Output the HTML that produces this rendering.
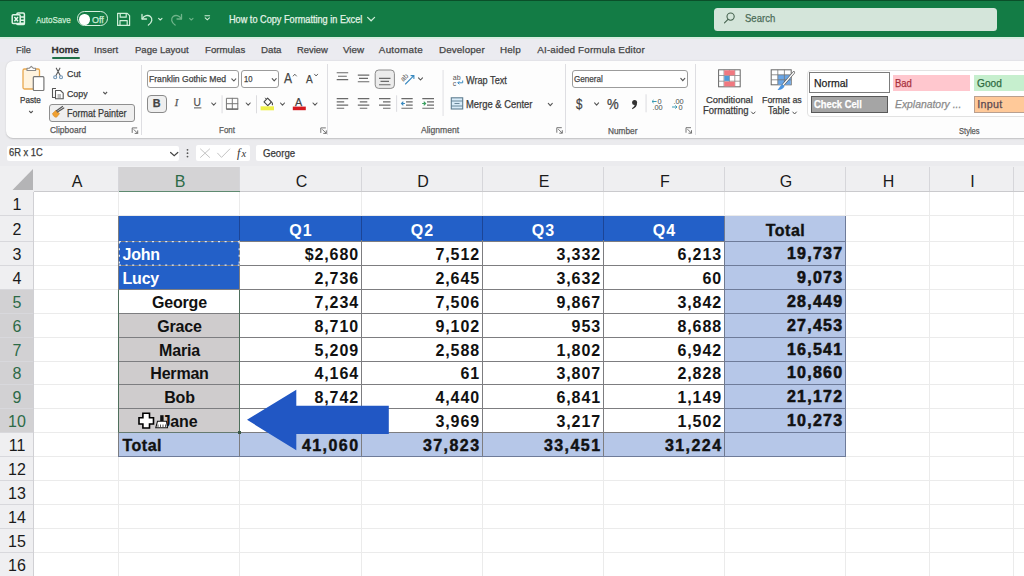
<!DOCTYPE html><html><head><meta charset="utf-8"><style>*{margin:0;padding:0;box-sizing:border-box}
html,body{width:1024px;height:576px;overflow:hidden;background:#ebebee;font-family:"Liberation Sans",sans-serif;position:relative}
.a{position:absolute}
.t{position:absolute;white-space:pre;line-height:1;-webkit-text-stroke:0.25px currentColor}
.ch{top:167px;height:25px;font-size:16px;text-align:center;line-height:29px;padding-left:2px;border-right:1px solid #d6d6da}
.rh{left:0;width:34px;font-size:16px;text-align:center;border-bottom:1px solid #d8d8dc}
.c{position:absolute;font-size:16px;font-weight:bold;color:#111;white-space:nowrap;overflow:hidden}
svg{position:absolute;overflow:visible}
</style></head><body>
<div class="a" style="left:0;top:0;width:1024px;height:37px;background:#137c45"></div>
<div class="a" style="left:0;top:0;width:1024px;height:1px;background:#0a4f29"></div>
<svg style="left:0;top:0" width="40" height="37"><g fill="none" stroke="#dff4e6" stroke-width="1.5">
<rect x="16.8" y="13" width="7.6" height="11.6" rx="1.2"/>
<path d="M19.5 16.9H24.3M19.5 20.2H24.3M19.5 23.3H24.3"/>
</g><rect x="12.2" y="14.8" width="8" height="8.6" rx="1" fill="#137c45" stroke="#dff4e6" stroke-width="1.5"/>
<path d="M14.4 17L18 21.2M18 17L14.4 21.2" stroke="#e8f8ee" stroke-width="1.5" fill="none"/></svg>
<div class="t" style="left:36.42px;top:14.76px;font-size:9.74px;letter-spacing:0.000px;color:#cfeed8;font-weight:normal;font-style:normal;font-family:'Liberation Sans';transform:scaleX(0.8219);transform-origin:0 0;">AutoSave</div>
<div class="a" style="left:77px;top:11.2px;width:30.5px;height:15.2px;border:1.7px solid #d8f0df;border-radius:8px"></div>
<div class="a" style="left:79.2px;top:14.2px;width:10.4px;height:10.4px;background:#ffffff;border-radius:5.2px"></div>
<div class="t" style="left:91.62px;top:14.76px;font-size:9.74px;letter-spacing:0.000px;color:#cfeed8;font-weight:normal;font-style:normal;font-family:'Liberation Sans';transform:scaleX(0.9210);transform-origin:0 0;">Off</div>
<svg style="left:0;top:0" width="400" height="37"><g fill="none" stroke="#cfeed8" stroke-width="1.2" stroke-linejoin="round">
<path d="M117.6 13.3H127.2L129.6 15.7V25.4H117.6Z"/>
<path d="M120.2 13.3V17.2H126.2V13.3"/>
<path d="M120 25.4V20.6H127.2V25.4"/>
</g>
<g fill="none" stroke="#cfeed8" stroke-width="1.3" stroke-linecap="round" stroke-linejoin="round">
<path d="M142 14.5V19H146.5"/>
<path d="M142.3 18.7C144 15.5 148 14.6 150.4 16.6C152.8 18.8 152.3 22.2 148.4 25"/>
<path d="M158.6 18.3L160.3 20L162 18.3" stroke-width="1.1"/>
</g>
<g fill="none" stroke="#6fb48a" stroke-width="1.3" stroke-linecap="round" stroke-linejoin="round">
<path d="M181.5 14.5V19H177"/>
<path d="M181.2 18.7C179.5 15.5 175.5 14.6 173.1 16.6C170.7 18.8 171.2 22.2 175.1 25"/>
<path d="M189.6 18.3L191.3 20L193 18.3" stroke-width="1.1"/>
</g>
<g fill="none" stroke="#cfeed8" stroke-width="1.1" stroke-linecap="round">
<path d="M205 15.8H209.6"/><path d="M205.2 17.8L207.3 19.8L209.4 17.8"/>
</g>
<path d="M367.6 17.4L371.1 20.8L374.6 17.4" fill="none" stroke="#cfeed8" stroke-width="1.2" stroke-linecap="round"/>
</svg>
<div class="t" style="left:229.39px;top:14.85px;font-size:10.1px;letter-spacing:0.000px;color:#e4f4e8;font-weight:normal;font-style:normal;font-family:'Liberation Sans';transform:scaleX(0.9069);transform-origin:0 0;">How to Copy Formatting in Excel</div>
<div class="a" style="left:714px;top:7.5px;width:283px;height:23.5px;background:#d4e5da;border-radius:3.5px"></div>
<svg style="left:0;top:0" width="1024" height="37"><g fill="none" stroke="#46634f" stroke-width="1.1" stroke-linecap="round">
<circle cx="730.6" cy="16.6" r="3.6"/><path d="M728 19.4L724.5 22.8"/></g></svg>
<div class="t" style="left:744.62px;top:13.10px;font-size:11.34px;letter-spacing:-0.000px;color:#4b6b57;font-weight:normal;font-style:normal;font-family:'Liberation Sans';transform:scaleX(0.8411);transform-origin:0 0;">Search</div>
<div class="a" style="left:0;top:37px;width:1024px;height:25px;background:#ebebf0"></div>
<div class="a" style="left:0;top:37px;width:1024px;height:1.5px;background:#d8eee0"></div>
<div class="t" style="left:16.21px;top:45.44px;font-size:9.88px;letter-spacing:0.000px;color:#454545;font-weight:normal;font-style:normal;font-family:'Liberation Sans';transform:scaleX(0.9358);transform-origin:0 0;">File</div>
<div class="t" style="left:94.01px;top:45.44px;font-size:9.88px;letter-spacing:0.000px;color:#454545;font-weight:normal;font-style:normal;font-family:'Liberation Sans';transform:scaleX(0.9796);transform-origin:0 0;">Insert</div>
<div class="t" style="left:135.01px;top:45.44px;font-size:9.88px;letter-spacing:0.000px;color:#454545;font-weight:normal;font-style:normal;font-family:'Liberation Sans';transform:scaleX(0.9663);transform-origin:0 0;">Page Layout</div>
<div class="t" style="left:204.61px;top:45.44px;font-size:9.88px;letter-spacing:0.000px;color:#454545;font-weight:normal;font-style:normal;font-family:'Liberation Sans';transform:scaleX(0.9768);transform-origin:0 0;">Formulas</div>
<div class="t" style="left:260.51px;top:45.44px;font-size:9.88px;letter-spacing:0.000px;color:#454545;font-weight:normal;font-style:normal;font-family:'Liberation Sans';transform:scaleX(0.9828);transform-origin:0 0;">Data</div>
<div class="t" style="left:296.51px;top:45.44px;font-size:9.88px;letter-spacing:0.000px;color:#454545;font-weight:normal;font-style:normal;font-family:'Liberation Sans';transform:scaleX(0.9540);transform-origin:0 0;">Review</div>
<div class="t" style="left:342.61px;top:45.44px;font-size:9.88px;letter-spacing:0.000px;color:#454545;font-weight:normal;font-style:normal;font-family:'Liberation Sans';transform:scaleX(0.9937);transform-origin:0 0;">View</div>
<div class="t" style="left:378.81px;top:45.44px;font-size:9.88px;letter-spacing:0.246px;color:#454545;font-weight:normal;font-style:normal;font-family:'Liberation Sans';">Automate</div>
<div class="t" style="left:438.91px;top:45.44px;font-size:9.88px;letter-spacing:0.098px;color:#454545;font-weight:normal;font-style:normal;font-family:'Liberation Sans';">Developer</div>
<div class="t" style="left:499.91px;top:45.44px;font-size:9.88px;letter-spacing:0.146px;color:#454545;font-weight:normal;font-style:normal;font-family:'Liberation Sans';">Help</div>
<div class="t" style="left:537.31px;top:45.44px;font-size:9.88px;letter-spacing:0.142px;color:#454545;font-weight:normal;font-style:normal;font-family:'Liberation Sans';">AI-aided Formula Editor</div>
<div class="t" style="left:51.61px;top:45.44px;font-size:9.88px;letter-spacing:0.285px;color:#333;font-weight:normal;font-style:normal;font-family:'Liberation Sans';-webkit-text-stroke:0.6px #333;">Home</div>
<div class="a" style="left:52px;top:57px;width:28px;height:2px;background:#1f6f47;border-radius:1px"></div>
<div class="a" style="left:0;top:62px;width:1024px;height:104px;background:#ebebee"></div>
<div class="a" style="left:6px;top:60.8px;width:1030px;height:77.2px;background:#fdfdfd;border-radius:7px;box-shadow:0 0.5px 1.5px rgba(0,0,0,0.18)"></div>
<div class="t" style="left:49.97px;top:126.19px;font-size:8.87px;letter-spacing:0.000px;color:#5a5a5a;font-weight:normal;font-style:normal;font-family:'Liberation Sans';transform:scaleX(0.9546);transform-origin:0 0;">Clipboard</div>
<div class="t" style="left:219.34px;top:126.13px;font-size:9.3px;letter-spacing:0.000px;color:#5a5a5a;font-weight:normal;font-style:normal;font-family:'Liberation Sans';transform:scaleX(0.8598);transform-origin:0 0;">Font</div>
<div class="t" style="left:420.95px;top:126.45px;font-size:9.16px;letter-spacing:0.000px;color:#5a5a5a;font-weight:normal;font-style:normal;font-family:'Liberation Sans';transform:scaleX(0.9357);transform-origin:0 0;">Alignment</div>
<div class="t" style="left:608.29px;top:126.76px;font-size:8.43px;letter-spacing:0.000px;color:#5a5a5a;font-weight:normal;font-style:normal;font-family:'Liberation Sans';transform:scaleX(0.9844);transform-origin:0 0;">Number</div>
<div class="t" style="left:958.98px;top:126.52px;font-size:8.72px;letter-spacing:0.000px;color:#5a5a5a;font-weight:normal;font-style:normal;font-family:'Liberation Sans';transform:scaleX(0.8674);transform-origin:0 0;">Styles</div>
<div class="a" style="left:141px;top:65px;width:1px;height:70px;background:#dedee2"></div>
<div class="a" style="left:327px;top:64px;width:1px;height:71px;background:#dedee2"></div>
<div class="a" style="left:565px;top:64px;width:1px;height:69px;background:#dedee2"></div>
<div class="a" style="left:694.5px;top:64px;width:1px;height:71px;background:#dedee2"></div>
<div class="t" style="left:20.25px;top:95.95px;font-size:9.16px;letter-spacing:0.000px;color:#3a3a3a;font-weight:normal;font-style:normal;font-family:'Liberation Sans';transform:scaleX(0.8923);transform-origin:0 0;">Paste</div>
<div class="t" style="left:66.61px;top:69.04px;font-size:9.88px;letter-spacing:0.000px;color:#3a3a3a;font-weight:normal;font-style:normal;font-family:'Liberation Sans';transform:scaleX(0.8976);transform-origin:0 0;">Cut</div>
<div class="t" style="left:66.62px;top:88.96px;font-size:9.74px;letter-spacing:0.000px;color:#3a3a3a;font-weight:normal;font-style:normal;font-family:'Liberation Sans';transform:scaleX(0.9061);transform-origin:0 0;">Copy</div>
<div class="a" style="left:49px;top:103.5px;width:85.6px;height:18px;border:1px solid #8f8f8f;border-radius:3px;background:#efefef"></div>
<div class="t" style="left:67.00px;top:108.61px;font-size:10.03px;letter-spacing:0.000px;color:#3a3a3a;font-weight:normal;font-style:normal;font-family:'Liberation Sans';transform:scaleX(0.8966);transform-origin:0 0;">Format Painter</div>
<svg style="left:0;top:0" width="1024" height="140">
<rect x="23" y="69" width="16.5" height="20" rx="1.5" fill="#fff3de" stroke="#e9a84e" stroke-width="1.3"/>
<path d="M27 70.5V68.2H29.4L31.3 66.3L33.2 68.2H35.6V70.5Z" fill="#fff" stroke="#8a8a8a" stroke-width="1.1" stroke-linejoin="round"/>
<rect x="33.3" y="76.7" width="10.6" height="13.8" rx="1" fill="#fff" stroke="#777" stroke-width="1.2"/>
<path d="M29.2 111L31 112.8L32.8 111" fill="none" stroke="#555" stroke-width="1.1"/>
<g fill="none" stroke-width="1.2" stroke-linecap="round">
<path d="M56.3 68.2L60.2 75.6M59.9 68.2L56 75.6" stroke="#5a5a5a" stroke-width="1.1"/>
<circle cx="55.2" cy="77.3" r="1.5" stroke="#7195b5" stroke-width="1.1"/><circle cx="61" cy="77.3" r="1.5" stroke="#7195b5" stroke-width="1.1"/></g>
<g fill="none" stroke="#555" stroke-width="1.1" stroke-linejoin="round">
<path d="M56 88.5H52.5V97.5H55"/>
<path d="M55.5 90.5H60.5L63.2 93.2V98.8H55.5Z" fill="#fff"/>
<path d="M57.5 95H61M57.5 97H61" stroke-width="0.8"/></g>
<path d="M103.3 92L105.2 93.9L107.1 92" fill="none" stroke="#555" stroke-width="1.1"/>
<path d="M52.5 113.5L56 110.2L59.5 113.7L56.5 117.2C55 117.5 53.2 116.3 52.5 113.5Z" fill="#f0a030" stroke="#d58a20" stroke-width="0.6"/>
<path d="M56.5 110.8L62.5 106.5M57.5 112L63.8 108" stroke="#555" stroke-width="1.2" fill="none" stroke-linecap="round"/>
<g fill="none" stroke="#666" stroke-width="0.9"><path d="M132.2 132.9V127.9H137.2M133.7 129.4L137.7 133.4M137.7 130.4V133.4H134.7" /><path d="M320.8 132.9V127.9H325.8M322.3 129.4L326.3 133.4M326.3 130.4V133.4H323.3" /><path d="M556.8 132.7V127.7H561.8M558.3 129.2L562.3 133.2M562.3 130.2V133.2H559.3" /><path d="M686.0 132.7V127.7H691.0M687.5 129.2L691.5 133.2M691.5 130.2V133.2H688.5" /></g>
</svg>
<div class="a" style="left:147.3px;top:70px;width:91.5px;height:18px;border:1px solid #9c9c9c;border-radius:3px;background:#fff"></div>
<div class="t" style="left:149.38px;top:75.42px;font-size:8.72px;letter-spacing:0.000px;color:#444;font-weight:normal;font-style:normal;font-family:'Liberation Sans';transform:scaleX(0.9870);transform-origin:0 0;">Franklin Gothic Med</div>
<div class="a" style="left:241.3px;top:70.3px;width:38px;height:17.3px;border:1px solid #9c9c9c;border-radius:3px;background:#fff"></div>
<div class="t" style="left:243.68px;top:75.42px;font-size:8.72px;letter-spacing:0.000px;color:#444;font-weight:normal;font-style:normal;font-family:'Liberation Sans';transform:scaleX(0.8760);transform-origin:0 0;">10</div>
<div class="a" style="left:147.3px;top:94.8px;width:19.3px;height:18.3px;border:1px solid #8a8a8a;border-radius:4px;background:#efefef"></div>
<div class="t" style="left:152.65px;top:97.86px;font-size:10.8px;letter-spacing:0.000px;color:#444;font-weight:bold;font-style:normal;font-family:'Liberation Sans';">B</div>
<div class="t" style="left:174.87px;top:98.11px;font-size:10.5px;letter-spacing:0.000px;color:#555;font-weight:normal;font-style:italic;font-family:'Liberation Serif';">I</div>
<div class="t" style="left:193.59px;top:98.07px;font-size:10.2px;letter-spacing:0.000px;color:#555;font-weight:normal;font-style:normal;font-family:'Liberation Sans';">U</div>
<div class="t" style="left:283.93px;top:70.90px;font-size:14.53px;letter-spacing:0.000px;color:#444;font-weight:normal;font-style:normal;font-family:'Liberation Sans';transform:scaleX(0.8258);transform-origin:0 0;">A</div>
<div class="t" style="left:306.20px;top:73.36px;font-size:11.63px;letter-spacing:0.000px;color:#444;font-weight:normal;font-style:normal;font-family:'Liberation Sans';transform:scaleX(0.8628);transform-origin:0 0;">A</div>
<div class="t" style="left:295.34px;top:96.65px;font-size:11.05px;letter-spacing:0.000px;color:#444;font-weight:normal;font-style:normal;font-family:'Liberation Sans';transform:scaleX(0.9763);transform-origin:0 0;">A</div>
<svg style="left:0;top:0" width="1024" height="140"><g fill="none" stroke="#555" stroke-width="1.1" stroke-linecap="round" stroke-linejoin="round">
<path d="M231.8 78.8L233.8 81.0L235.8 78.8"/>
<path d="M272.2 78.6L274.2 80.8L276.2 78.6"/>
<path d="M211.7 103L213.7 105.2L215.7 103"/>
<path d="M246.2 103L248.2 105.2L250.2 103"/>
<path d="M280.5 103L282.5 105.2L284.5 103"/>
<path d="M313 103L315.0 105.2L317 103"/>
<path d="M594.6 102.9L596.6 105.10000000000001L598.6 102.9"/>
<path d="M680.8 78.4L682.8 80.60000000000001L684.8 78.4"/>
<path d="M418.5 77.8L420.5 80.0L422.5 77.8"/>
<path d="M548.3 103.4L550.3 105.60000000000001L552.3 103.4"/>
<path d="M293.2 76L294.8 74.2L296.4 76M314.5 74.2L316.1 76L317.7 74.2" stroke-width="0.9"/>
<path d="M194.4 107.9H201" stroke-width="1"/>
<rect x="226.8" y="98.3" width="11" height="10.8" stroke="#777" stroke-width="1"/><path d="M232.3 98.3V109.1M226.8 103.7H237.8" stroke="#777" stroke-width="1"/>
<path d="M226.8 109.1H237.8" stroke="#666" stroke-width="1.3"/>
</g><g fill="#d8d8dc"><rect x="221.6" y="95.3" width="0.9" height="18"/><rect x="256" y="95.3" width="0.9" height="18"/><rect x="396.2" y="95.3" width="0.9" height="16.5"/><rect x="645.6" y="94.3" width="0.9" height="18"/></g>
<path d="M264 101.8L267.6 98.2L271.4 102L267.8 105.6Z" fill="none" stroke="#444" stroke-width="1.1" stroke-linejoin="round"/><path d="M266.2 99L265.2 97.8" stroke="#444" stroke-width="1"/><path d="M271.6 102.2C272.6 103.2 272.8 104.3 272 105" stroke="#444" stroke-width="1.1" fill="none"/>
<rect x="260.6" y="106.3" width="13.4" height="4" fill="#eef04a"/>
<rect x="292.8" y="106.6" width="13" height="3.6" fill="#d71920"/>
</svg>
<svg style="left:0;top:0" width="1024" height="140"><rect x="442.6" y="70" width="0.9" height="46" fill="#dcdce0"/><g stroke="#6a6a6a" stroke-width="1.1" fill="none">
<path d="M336.7 72.8H348.2M338 76.3H346.8M336.7 79.6H348.2"/>
<path d="M357.8 75.1H369.3M359 78.4H368M357.8 81.7H369.3"/>
</g><rect x="375.2" y="70" width="19.2" height="18.4" rx="3.5" fill="#ececec" stroke="#8a8a8a" stroke-width="1"/>
<g stroke="#6a6a6a" stroke-width="1.1" fill="none"><path d="M379 78.4H390.5M380.5 81.4H389M379 84.8H390.5"/>
<path d="M336.7 98.6H348.2M336.7 101.9H344.2M336.7 105.1H348.2M336.7 108.3H344.2"/>
<path d="M357.8 98.6H369.3M359.8 101.9H367.3M357.8 105.1H369.3M359.8 108.3H367.3"/>
<path d="M379 98.6H390.5M383 101.9H390.5M379 105.1H390.5M383 108.3H390.5"/>
<path d="M401.4 98.6H412.7M406 101.9H412.7M406 105.1H412.7M401.4 108.3H412.7"/>
<path d="M422.3 98.6H434M427 101.9H434M427 105.1H434M422.3 108.3H434"/>
</g><g stroke-width="1.1" fill="none" stroke-linecap="round">
<path d="M404.5 103.5H401.5M403 102L401.5 103.5L403 105" stroke="#3a8ac0"/>
<path d="M422.6 103.5H425.6M424.1 102L425.6 103.5L424.1 105" stroke="#3aa060"/>
</g><text transform="translate(403.2 82) rotate(-45)" font-family="Liberation Sans" font-size="7.2" fill="#555">ab</text><g stroke-width="1.1" fill="none" stroke-linecap="round"><path d="M405.5 84L413.6 75.9M411 75.6H413.9V78.5" stroke="#3a8ac0"/>
</g>
<text x="452.8" y="79.6" font-family="Liberation Sans" font-size="7" fill="#555">ab</text><text x="452.8" y="85.6" font-family="Liberation Sans" font-size="7" fill="#555">c</text>
<path d="M462.7 80.5V82.8H457.8M459.3 81.3L457.8 82.8L459.3 84.3" fill="none" stroke="#3a8ac0" stroke-width="1"/>
<rect x="451.3" y="97.8" width="11.4" height="11.2" fill="#d8ebf8" stroke="#5e7d90" stroke-width="1.1"/><path d="M451.3 101H462.7M451.3 106H462.7M454.5 103.5H459.5" stroke="#5e7d90" stroke-width="0.9"/>
</svg>
<div class="t" style="left:466.15px;top:74.69px;font-size:10.76px;letter-spacing:0.000px;color:#3a3a3a;font-weight:normal;font-style:normal;font-family:'Liberation Sans';transform:scaleX(0.8521);transform-origin:0 0;">Wrap Text</div>
<div class="t" style="left:466.20px;top:99.91px;font-size:10.03px;letter-spacing:0.000px;color:#3a3a3a;font-weight:normal;font-style:normal;font-family:'Liberation Sans';transform:scaleX(0.9391);transform-origin:0 0;">Merge &amp; Center</div>
<div class="a" style="left:572.3px;top:70.2px;width:115.5px;height:18px;border:1px solid #9c9c9c;border-radius:3px;background:#fff"></div>
<div class="t" style="left:573.95px;top:75.15px;font-size:9.16px;letter-spacing:0.000px;color:#444;font-weight:normal;font-style:normal;font-family:'Liberation Sans';transform:scaleX(0.8871);transform-origin:0 0;">General</div>
<div class="t" style="left:576.44px;top:96.72px;font-size:14.39px;letter-spacing:-0.100px;color:#444;font-weight:normal;font-style:normal;font-family:'Liberation Sans';transform:scaleX(0.8000);transform-origin:0 0;">$</div>
<div class="t" style="left:606.85px;top:97.16px;font-size:14.1px;letter-spacing:0.000px;color:#444;font-weight:normal;font-style:normal;font-family:'Liberation Sans';transform:scaleX(0.9325);transform-origin:0 0;">%</div>
<svg style="left:0;top:0" width="1024" height="140">
<circle cx="634.6" cy="102.6" r="2.5" fill="#333"/><path d="M636.9 103C637.2 105.8 635.5 108 632.4 109.2L632 108.2C633.8 107.2 634.6 106 634.8 104.6Z" fill="#333"/>
<text x="657.6" y="104.2" font-family="Liberation Sans" font-size="7.4" fill="#4a4a4a">0</text><text x="652.4" y="110" font-family="Liberation Sans" font-size="7.4" fill="#4a4a4a">.00</text>
<path d="M656.6 101.5H652M653.6 100L652 101.5L653.6 103" stroke="#3a9ab0" stroke-width="1" fill="none"/>
<text x="673.4" y="104.2" font-family="Liberation Sans" font-size="7.4" fill="#4a4a4a">.00</text><text x="678.6" y="110" font-family="Liberation Sans" font-size="7.4" fill="#4a4a4a">0</text>
<path d="M672 107H677M675.4 105.4L677 107L675.4 108.6" stroke="#3a9ab0" stroke-width="1" fill="none"/>
<rect x="718.6" y="69.8" width="21.6" height="17" fill="#fff" stroke="#666" stroke-width="1"/>
<path d="M724 69.8V86.8M729.4 69.8V86.8M734.8 69.8V86.8M718.6 75.5H740.2M718.6 81.2H740.2" stroke="#888" stroke-width="0.8"/>
<rect x="724.2" y="70.3" width="10.6" height="5" fill="#f07880"/><rect x="724.2" y="81.6" width="10.6" height="4.8" fill="#f07880"/><rect x="724.3" y="75.9" width="5" height="5" fill="#4f9ad8"/>
<rect x="771.2" y="69.8" width="20" height="15" fill="#fff" stroke="#666" stroke-width="1"/>
<rect x="777.8" y="74.8" width="13" height="9.8" fill="#6aa6e6"/>
<path d="M777.8 69.8V84.8M784.4 69.8V84.8M771.2 74.8H791.2M771.2 79.8H791.2" stroke="#777" stroke-width="0.8"/>
<path d="M793.8 72.5L783 85" stroke="#555" stroke-width="2.6" stroke-linecap="round"/><path d="M793.8 72.5L783 85" stroke="#fff" stroke-width="1.2" stroke-linecap="round"/>
<path d="M782.5 84.2C780.5 85 779.6 87.5 777.5 90C780.5 90.2 783.6 88.8 784.5 86.2Z" fill="#4a94e0"/>
<g fill="none" stroke="#555" stroke-width="1" stroke-linecap="round"><path d="M751.5 112L753.3 114L755.1 112"/><path d="M792.8 112L794.5999999999999 114L796.4 112"/></g>
<g fill="none" stroke="#555" stroke-width="1.1" stroke-linecap="round"><path d="M680.8 78.4L682.8 80.60000000000001L684.8 78.4"/></g>
</svg>
<div class="t" style="left:705.52px;top:94.56px;font-size:9.74px;letter-spacing:0.000px;color:#3a3a3a;font-weight:normal;font-style:normal;font-family:'Liberation Sans';transform:scaleX(0.9627);transform-origin:0 0;">Conditional</div>
<div class="t" style="left:702.80px;top:106.01px;font-size:10.03px;letter-spacing:0.000px;color:#3a3a3a;font-weight:normal;font-style:normal;font-family:'Liberation Sans';transform:scaleX(0.9504);transform-origin:0 0;">Formatting</div>
<div class="t" style="left:761.92px;top:94.56px;font-size:9.74px;letter-spacing:0.000px;color:#3a3a3a;font-weight:normal;font-style:normal;font-family:'Liberation Sans';transform:scaleX(0.9081);transform-origin:0 0;">Format as</div>
<div class="t" style="left:767.50px;top:106.01px;font-size:10.03px;letter-spacing:0.000px;color:#3a3a3a;font-weight:normal;font-style:normal;font-family:'Liberation Sans';transform:scaleX(0.8976);transform-origin:0 0;">Table</div>
<div class="a" style="left:807.4px;top:70.4px;width:240px;height:46.5px;border:1px solid #e2e2e2;border-radius:4px;background:#fff"></div>
<div class="a" style="left:808.8px;top:72.2px;width:81.2px;height:21.2px;border:1.6px solid #7c7c7c;background:#fff"></div>
<div class="t" style="left:813.50px;top:76.66px;font-size:11.63px;letter-spacing:0.000px;color:#222;font-weight:normal;font-style:normal;font-family:'Liberation Sans';transform:scaleX(0.9021);transform-origin:0 0;">Normal</div>
<div class="a" style="left:892.8px;top:74.5px;width:76.9px;height:16.6px;background:#ffc7ce"></div>
<div class="t" style="left:895.20px;top:76.66px;font-size:11.63px;letter-spacing:0.000px;color:#a8303c;font-weight:normal;font-style:normal;font-family:'Liberation Sans';transform:scaleX(0.8169);transform-origin:0 0;">Bad</div>
<div class="a" style="left:974.2px;top:74.5px;width:60px;height:16.6px;background:#c6efce"></div>
<div class="t" style="left:977.10px;top:76.66px;font-size:11.63px;letter-spacing:0.000px;color:#2f6b3e;font-weight:normal;font-style:normal;font-family:'Liberation Sans';transform:scaleX(0.8716);transform-origin:0 0;">Good</div>
<div class="a" style="left:810.8px;top:95.9px;width:77.2px;height:17.3px;border:1.5px solid #595959;background:#a5a5a5"></div>
<div class="t" style="left:813.55px;top:99.09px;font-size:10.76px;letter-spacing:0.000px;color:#fff;font-weight:bold;font-style:normal;font-family:'Liberation Sans';transform:scaleX(0.8696);transform-origin:0 0;">Check Cell</div>
<div class="t" style="left:895.25px;top:99.09px;font-size:10.76px;letter-spacing:0.000px;color:#8a8a8a;font-weight:normal;font-style:italic;font-family:'Liberation Sans';transform:scaleX(0.9648);transform-origin:0 0;">Explanatory ...</div>
<div class="a" style="left:974.2px;top:96.1px;width:60px;height:17.1px;border:1px solid #b9a090;background:#ffc999"></div>
<div class="t" style="left:977.15px;top:99.09px;font-size:10.76px;letter-spacing:0.295px;color:#5b4a52;font-weight:normal;font-style:normal;font-family:'Liberation Sans';">Input</div>
<div class="a" style="left:7px;top:145.8px;width:171.8px;height:15.4px;background:#fff;border-radius:2px"></div>
<div class="t" style="left:8.59px;top:148.49px;font-size:10.17px;letter-spacing:0.000px;color:#3a3a3a;font-weight:normal;font-style:normal;font-family:'Liberation Sans';transform:scaleX(0.9186);transform-origin:0 0;">6R x 1C</div>
<div class="a" style="left:195.9px;top:145px;width:54.1px;height:16.2px;background:#fff;border-radius:2px"></div>
<div class="a" style="left:255.9px;top:145px;width:780px;height:16.2px;background:#fff;border-radius:2px"></div>
<div class="t" style="left:263.09px;top:148.59px;font-size:10.17px;letter-spacing:0.000px;color:#3a3a3a;font-weight:normal;font-style:normal;font-family:'Liberation Sans';transform:scaleX(0.9501);transform-origin:0 0;">George</div>
<svg style="left:0;top:0" width="1024" height="170"><g fill="none" stroke-linecap="round">
<path d="M170.6 152.5L174.2 155.6L177.8 152.5" stroke="#444" stroke-width="1.2"/>
<path d="M200.5 149L209.6 157.4M209.6 149L200.5 157.4" stroke="#c4c4c4" stroke-width="1"/>
<path d="M217.6 153.2L221.5 157.4L229.8 149" stroke="#c4c4c4" stroke-width="1"/>
</g><g fill="#555"><circle cx="187.5" cy="149.8" r="0.9"/><circle cx="187.5" cy="153.2" r="0.9"/><circle cx="187.5" cy="156.6" r="0.9"/></g>
<text x="237" y="157.3" font-family="Liberation Serif" font-style="italic" font-size="12" fill="#333">f</text><text x="241.5" y="157.3" font-family="Liberation Serif" font-style="italic" font-size="10.5" fill="#333">x</text>
</svg>
<div class="a" style="left:0;top:166px;width:1024px;height:26px;background:#efeff1"></div>
<div class="a" style="left:0;top:192px;width:1024px;height:384px;background:#ffffff"></div>
<div class="a" style="left:0;top:192px;width:34px;height:384px;background:#efeff1"></div>
<div class="a" style="left:118px;top:192px;width:1px;height:384px;background:#ebebeb"></div>
<div class="a" style="left:239px;top:192px;width:1px;height:384px;background:#ebebeb"></div>
<div class="a" style="left:361px;top:192px;width:1px;height:384px;background:#ebebeb"></div>
<div class="a" style="left:482px;top:192px;width:1px;height:384px;background:#ebebeb"></div>
<div class="a" style="left:603px;top:192px;width:1px;height:384px;background:#ebebeb"></div>
<div class="a" style="left:724px;top:192px;width:1px;height:384px;background:#ebebeb"></div>
<div class="a" style="left:845px;top:192px;width:1px;height:384px;background:#ebebeb"></div>
<div class="a" style="left:929px;top:192px;width:1px;height:384px;background:#ebebeb"></div>
<div class="a" style="left:1013px;top:192px;width:1px;height:384px;background:#ebebeb"></div>
<div class="a" style="left:1097px;top:192px;width:1px;height:384px;background:#ebebeb"></div>
<div class="a" style="left:34px;top:215px;width:990px;height:1px;background:#ebebeb"></div>
<div class="a" style="left:34px;top:241px;width:990px;height:1px;background:#ebebeb"></div>
<div class="a" style="left:34px;top:265px;width:990px;height:1px;background:#ebebeb"></div>
<div class="a" style="left:34px;top:289px;width:990px;height:1px;background:#ebebeb"></div>
<div class="a" style="left:34px;top:313px;width:990px;height:1px;background:#ebebeb"></div>
<div class="a" style="left:34px;top:337px;width:990px;height:1px;background:#ebebeb"></div>
<div class="a" style="left:34px;top:361px;width:990px;height:1px;background:#ebebeb"></div>
<div class="a" style="left:34px;top:384px;width:990px;height:1px;background:#ebebeb"></div>
<div class="a" style="left:34px;top:408px;width:990px;height:1px;background:#ebebeb"></div>
<div class="a" style="left:34px;top:432px;width:990px;height:1px;background:#ebebeb"></div>
<div class="a" style="left:34px;top:456px;width:990px;height:1px;background:#ebebeb"></div>
<div class="a" style="left:34px;top:480px;width:990px;height:1px;background:#ebebeb"></div>
<div class="a" style="left:34px;top:504px;width:990px;height:1px;background:#ebebeb"></div>
<div class="a" style="left:34px;top:528px;width:990px;height:1px;background:#ebebeb"></div>
<div class="a" style="left:34px;top:552px;width:990px;height:1px;background:#ebebeb"></div>
<div class="a" style="left:34px;top:576px;width:990px;height:1px;background:#ebebeb"></div>
<div class="a" style="left:119px;top:216px;width:121px;height:26px;background:#2360c8"></div>
<div class="a" style="left:240px;top:216px;width:122px;height:26px;background:#2360c8"></div>
<div class="c" style="left:240px;top:216px;width:122px;height:26px;line-height:30px;color:#fff;letter-spacing:1.0px;text-align:center;">Q1</div>
<div class="a" style="left:362px;top:216px;width:121px;height:26px;background:#2360c8"></div>
<div class="c" style="left:362px;top:216px;width:121px;height:26px;line-height:30px;color:#fff;letter-spacing:1.0px;text-align:center;">Q2</div>
<div class="a" style="left:483px;top:216px;width:121px;height:26px;background:#2360c8"></div>
<div class="c" style="left:483px;top:216px;width:121px;height:26px;line-height:30px;color:#fff;letter-spacing:1.0px;text-align:center;">Q3</div>
<div class="a" style="left:604px;top:216px;width:121px;height:26px;background:#2360c8"></div>
<div class="c" style="left:604px;top:216px;width:121px;height:26px;line-height:30px;color:#fff;letter-spacing:1.0px;text-align:center;">Q4</div>
<div class="a" style="left:725px;top:216px;width:121px;height:26px;background:#b6c7e8"></div>
<div class="c" style="left:725px;top:216px;width:121px;height:26px;line-height:30px;color:#111;letter-spacing:0.5px;-webkit-text-stroke:0.35px #111;text-align:center;">Total</div>
<div class="a" style="left:119px;top:242px;width:121px;height:24px;background:#2360c8"></div>
<div class="c" style="left:119px;top:242px;width:121px;height:24px;line-height:25px;color:#fff;letter-spacing:-0.2px;padding-left:3.5px;">John</div>
<div class="a" style="left:240px;top:242px;width:122px;height:24px;background:#ffffff"></div>
<div class="c" style="left:240px;top:242px;width:122px;height:24px;line-height:25px;color:#111;letter-spacing:0.9px;text-align:right;padding-right:3.00px;">$2,680</div>
<div class="a" style="left:362px;top:242px;width:121px;height:24px;background:#ffffff"></div>
<div class="c" style="left:362px;top:242px;width:121px;height:24px;line-height:25px;color:#111;letter-spacing:0.9px;text-align:right;padding-right:3.00px;">7,512</div>
<div class="a" style="left:483px;top:242px;width:121px;height:24px;background:#ffffff"></div>
<div class="c" style="left:483px;top:242px;width:121px;height:24px;line-height:25px;color:#111;letter-spacing:0.9px;text-align:right;padding-right:3.00px;">3,332</div>
<div class="a" style="left:604px;top:242px;width:121px;height:24px;background:#ffffff"></div>
<div class="c" style="left:604px;top:242px;width:121px;height:24px;line-height:25px;color:#111;letter-spacing:0.9px;text-align:right;padding-right:3.00px;">6,213</div>
<div class="a" style="left:725px;top:242px;width:121px;height:24px;background:#b6c7e8"></div>
<div class="c" style="left:725px;top:242px;width:121px;height:24px;line-height:23.5px;color:#111;letter-spacing:1.25px;-webkit-text-stroke:0.55px #111;text-align:right;padding-right:2.65px;">19,737</div>
<div class="a" style="left:119px;top:266px;width:121px;height:24px;background:#2360c8"></div>
<div class="c" style="left:119px;top:266px;width:121px;height:24px;line-height:25px;color:#fff;letter-spacing:-0.2px;padding-left:3.5px;">Lucy</div>
<div class="a" style="left:240px;top:266px;width:122px;height:24px;background:#ffffff"></div>
<div class="c" style="left:240px;top:266px;width:122px;height:24px;line-height:25px;color:#111;letter-spacing:0.9px;text-align:right;padding-right:3.00px;">2,736</div>
<div class="a" style="left:362px;top:266px;width:121px;height:24px;background:#ffffff"></div>
<div class="c" style="left:362px;top:266px;width:121px;height:24px;line-height:25px;color:#111;letter-spacing:0.9px;text-align:right;padding-right:3.00px;">2,645</div>
<div class="a" style="left:483px;top:266px;width:121px;height:24px;background:#ffffff"></div>
<div class="c" style="left:483px;top:266px;width:121px;height:24px;line-height:25px;color:#111;letter-spacing:0.9px;text-align:right;padding-right:3.00px;">3,632</div>
<div class="a" style="left:604px;top:266px;width:121px;height:24px;background:#ffffff"></div>
<div class="c" style="left:604px;top:266px;width:121px;height:24px;line-height:25px;color:#111;letter-spacing:0.9px;text-align:right;padding-right:3.00px;">60</div>
<div class="a" style="left:725px;top:266px;width:121px;height:24px;background:#b6c7e8"></div>
<div class="c" style="left:725px;top:266px;width:121px;height:24px;line-height:23.5px;color:#111;letter-spacing:1.25px;-webkit-text-stroke:0.55px #111;text-align:right;padding-right:2.65px;">9,073</div>
<div class="a" style="left:119px;top:290px;width:121px;height:24px;background:#ffffff"></div>
<div class="c" style="left:119px;top:290px;width:121px;height:24px;line-height:25px;color:#111;letter-spacing:-0.2px;text-align:center;">George</div>
<div class="a" style="left:240px;top:290px;width:122px;height:24px;background:#ffffff"></div>
<div class="c" style="left:240px;top:290px;width:122px;height:24px;line-height:25px;color:#111;letter-spacing:0.9px;text-align:right;padding-right:3.00px;">7,234</div>
<div class="a" style="left:362px;top:290px;width:121px;height:24px;background:#ffffff"></div>
<div class="c" style="left:362px;top:290px;width:121px;height:24px;line-height:25px;color:#111;letter-spacing:0.9px;text-align:right;padding-right:3.00px;">7,506</div>
<div class="a" style="left:483px;top:290px;width:121px;height:24px;background:#ffffff"></div>
<div class="c" style="left:483px;top:290px;width:121px;height:24px;line-height:25px;color:#111;letter-spacing:0.9px;text-align:right;padding-right:3.00px;">9,867</div>
<div class="a" style="left:604px;top:290px;width:121px;height:24px;background:#ffffff"></div>
<div class="c" style="left:604px;top:290px;width:121px;height:24px;line-height:25px;color:#111;letter-spacing:0.9px;text-align:right;padding-right:3.00px;">3,842</div>
<div class="a" style="left:725px;top:290px;width:121px;height:24px;background:#b6c7e8"></div>
<div class="c" style="left:725px;top:290px;width:121px;height:24px;line-height:23.5px;color:#111;letter-spacing:1.25px;-webkit-text-stroke:0.55px #111;text-align:right;padding-right:2.65px;">28,449</div>
<div class="a" style="left:119px;top:314px;width:121px;height:24px;background:#cfcccd"></div>
<div class="c" style="left:119px;top:314px;width:121px;height:24px;line-height:25px;color:#111;letter-spacing:-0.2px;text-align:center;">Grace</div>
<div class="a" style="left:240px;top:314px;width:122px;height:24px;background:#ffffff"></div>
<div class="c" style="left:240px;top:314px;width:122px;height:24px;line-height:25px;color:#111;letter-spacing:0.9px;text-align:right;padding-right:3.00px;">8,710</div>
<div class="a" style="left:362px;top:314px;width:121px;height:24px;background:#ffffff"></div>
<div class="c" style="left:362px;top:314px;width:121px;height:24px;line-height:25px;color:#111;letter-spacing:0.9px;text-align:right;padding-right:3.00px;">9,102</div>
<div class="a" style="left:483px;top:314px;width:121px;height:24px;background:#ffffff"></div>
<div class="c" style="left:483px;top:314px;width:121px;height:24px;line-height:25px;color:#111;letter-spacing:0.9px;text-align:right;padding-right:3.00px;">953</div>
<div class="a" style="left:604px;top:314px;width:121px;height:24px;background:#ffffff"></div>
<div class="c" style="left:604px;top:314px;width:121px;height:24px;line-height:25px;color:#111;letter-spacing:0.9px;text-align:right;padding-right:3.00px;">8,688</div>
<div class="a" style="left:725px;top:314px;width:121px;height:24px;background:#b6c7e8"></div>
<div class="c" style="left:725px;top:314px;width:121px;height:24px;line-height:23.5px;color:#111;letter-spacing:1.25px;-webkit-text-stroke:0.55px #111;text-align:right;padding-right:2.65px;">27,453</div>
<div class="a" style="left:119px;top:338px;width:121px;height:24px;background:#cfcccd"></div>
<div class="c" style="left:119px;top:338px;width:121px;height:24px;line-height:25px;color:#111;letter-spacing:-0.2px;text-align:center;">Maria</div>
<div class="a" style="left:240px;top:338px;width:122px;height:24px;background:#ffffff"></div>
<div class="c" style="left:240px;top:338px;width:122px;height:24px;line-height:25px;color:#111;letter-spacing:0.9px;text-align:right;padding-right:3.00px;">5,209</div>
<div class="a" style="left:362px;top:338px;width:121px;height:24px;background:#ffffff"></div>
<div class="c" style="left:362px;top:338px;width:121px;height:24px;line-height:25px;color:#111;letter-spacing:0.9px;text-align:right;padding-right:3.00px;">2,588</div>
<div class="a" style="left:483px;top:338px;width:121px;height:24px;background:#ffffff"></div>
<div class="c" style="left:483px;top:338px;width:121px;height:24px;line-height:25px;color:#111;letter-spacing:0.9px;text-align:right;padding-right:3.00px;">1,802</div>
<div class="a" style="left:604px;top:338px;width:121px;height:24px;background:#ffffff"></div>
<div class="c" style="left:604px;top:338px;width:121px;height:24px;line-height:25px;color:#111;letter-spacing:0.9px;text-align:right;padding-right:3.00px;">6,942</div>
<div class="a" style="left:725px;top:338px;width:121px;height:24px;background:#b6c7e8"></div>
<div class="c" style="left:725px;top:338px;width:121px;height:24px;line-height:23.5px;color:#111;letter-spacing:1.25px;-webkit-text-stroke:0.55px #111;text-align:right;padding-right:2.65px;">16,541</div>
<div class="a" style="left:119px;top:362px;width:121px;height:23px;background:#cfcccd"></div>
<div class="c" style="left:119px;top:362px;width:121px;height:23px;line-height:24px;color:#111;letter-spacing:-0.2px;text-align:center;">Herman</div>
<div class="a" style="left:240px;top:362px;width:122px;height:23px;background:#ffffff"></div>
<div class="c" style="left:240px;top:362px;width:122px;height:23px;line-height:24px;color:#111;letter-spacing:0.9px;text-align:right;padding-right:3.00px;">4,164</div>
<div class="a" style="left:362px;top:362px;width:121px;height:23px;background:#ffffff"></div>
<div class="c" style="left:362px;top:362px;width:121px;height:23px;line-height:24px;color:#111;letter-spacing:0.9px;text-align:right;padding-right:3.00px;">61</div>
<div class="a" style="left:483px;top:362px;width:121px;height:23px;background:#ffffff"></div>
<div class="c" style="left:483px;top:362px;width:121px;height:23px;line-height:24px;color:#111;letter-spacing:0.9px;text-align:right;padding-right:3.00px;">3,807</div>
<div class="a" style="left:604px;top:362px;width:121px;height:23px;background:#ffffff"></div>
<div class="c" style="left:604px;top:362px;width:121px;height:23px;line-height:24px;color:#111;letter-spacing:0.9px;text-align:right;padding-right:3.00px;">2,828</div>
<div class="a" style="left:725px;top:362px;width:121px;height:23px;background:#b6c7e8"></div>
<div class="c" style="left:725px;top:362px;width:121px;height:23px;line-height:22.5px;color:#111;letter-spacing:1.25px;-webkit-text-stroke:0.55px #111;text-align:right;padding-right:2.65px;">10,860</div>
<div class="a" style="left:119px;top:385px;width:121px;height:24px;background:#cfcccd"></div>
<div class="c" style="left:119px;top:385px;width:121px;height:24px;line-height:25px;color:#111;letter-spacing:-0.2px;text-align:center;">Bob</div>
<div class="a" style="left:240px;top:385px;width:122px;height:24px;background:#ffffff"></div>
<div class="c" style="left:240px;top:385px;width:122px;height:24px;line-height:25px;color:#111;letter-spacing:0.9px;text-align:right;padding-right:3.00px;">8,742</div>
<div class="a" style="left:362px;top:385px;width:121px;height:24px;background:#ffffff"></div>
<div class="c" style="left:362px;top:385px;width:121px;height:24px;line-height:25px;color:#111;letter-spacing:0.9px;text-align:right;padding-right:3.00px;">4,440</div>
<div class="a" style="left:483px;top:385px;width:121px;height:24px;background:#ffffff"></div>
<div class="c" style="left:483px;top:385px;width:121px;height:24px;line-height:25px;color:#111;letter-spacing:0.9px;text-align:right;padding-right:3.00px;">6,841</div>
<div class="a" style="left:604px;top:385px;width:121px;height:24px;background:#ffffff"></div>
<div class="c" style="left:604px;top:385px;width:121px;height:24px;line-height:25px;color:#111;letter-spacing:0.9px;text-align:right;padding-right:3.00px;">1,149</div>
<div class="a" style="left:725px;top:385px;width:121px;height:24px;background:#b6c7e8"></div>
<div class="c" style="left:725px;top:385px;width:121px;height:24px;line-height:23.5px;color:#111;letter-spacing:1.25px;-webkit-text-stroke:0.55px #111;text-align:right;padding-right:2.65px;">21,172</div>
<div class="a" style="left:119px;top:409px;width:121px;height:24px;background:#cfcccd"></div>
<div class="c" style="left:119px;top:409px;width:121px;height:24px;line-height:25px;color:#111;letter-spacing:-0.2px;text-align:center;">Jane</div>
<div class="a" style="left:240px;top:409px;width:122px;height:24px;background:#ffffff"></div>
<div class="a" style="left:362px;top:409px;width:121px;height:24px;background:#ffffff"></div>
<div class="c" style="left:362px;top:409px;width:121px;height:24px;line-height:25px;color:#111;letter-spacing:0.9px;text-align:right;padding-right:3.00px;">3,969</div>
<div class="a" style="left:483px;top:409px;width:121px;height:24px;background:#ffffff"></div>
<div class="c" style="left:483px;top:409px;width:121px;height:24px;line-height:25px;color:#111;letter-spacing:0.9px;text-align:right;padding-right:3.00px;">3,217</div>
<div class="a" style="left:604px;top:409px;width:121px;height:24px;background:#ffffff"></div>
<div class="c" style="left:604px;top:409px;width:121px;height:24px;line-height:25px;color:#111;letter-spacing:0.9px;text-align:right;padding-right:3.00px;">1,502</div>
<div class="a" style="left:725px;top:409px;width:121px;height:24px;background:#b6c7e8"></div>
<div class="c" style="left:725px;top:409px;width:121px;height:24px;line-height:23.5px;color:#111;letter-spacing:1.25px;-webkit-text-stroke:0.55px #111;text-align:right;padding-right:2.65px;">10,273</div>
<div class="a" style="left:119px;top:433px;width:121px;height:24px;background:#b6c7e8"></div>
<div class="c" style="left:119px;top:433px;width:121px;height:24px;line-height:25px;color:#111;letter-spacing:0.5px;-webkit-text-stroke:0.35px #111;padding-left:3.5px;">Total</div>
<div class="a" style="left:240px;top:433px;width:122px;height:24px;background:#b6c7e8"></div>
<div class="c" style="left:240px;top:433px;width:122px;height:24px;line-height:25px;color:#111;letter-spacing:1.45px;-webkit-text-stroke:0.45px #111;text-align:right;padding-right:2.45px;">41,060</div>
<div class="a" style="left:362px;top:433px;width:121px;height:24px;background:#b6c7e8"></div>
<div class="c" style="left:362px;top:433px;width:121px;height:24px;line-height:25px;color:#111;letter-spacing:1.45px;-webkit-text-stroke:0.45px #111;text-align:right;padding-right:2.45px;">37,823</div>
<div class="a" style="left:483px;top:433px;width:121px;height:24px;background:#b6c7e8"></div>
<div class="c" style="left:483px;top:433px;width:121px;height:24px;line-height:25px;color:#111;letter-spacing:1.45px;-webkit-text-stroke:0.45px #111;text-align:right;padding-right:2.45px;">33,451</div>
<div class="a" style="left:604px;top:433px;width:121px;height:24px;background:#b6c7e8"></div>
<div class="c" style="left:604px;top:433px;width:121px;height:24px;line-height:25px;color:#111;letter-spacing:1.45px;-webkit-text-stroke:0.45px #111;text-align:right;padding-right:2.45px;">31,224</div>
<div class="a" style="left:725px;top:433px;width:121px;height:24px;background:#b6c7e8"></div>
<div class="a" style="left:118px;top:241px;width:728px;height:1px;background:#7d7d80"></div>
<div class="a" style="left:118px;top:265px;width:728px;height:1px;background:#7d7d80"></div>
<div class="a" style="left:118px;top:289px;width:728px;height:1px;background:#7d7d80"></div>
<div class="a" style="left:118px;top:313px;width:728px;height:1px;background:#7d7d80"></div>
<div class="a" style="left:118px;top:337px;width:728px;height:1px;background:#7d7d80"></div>
<div class="a" style="left:118px;top:361px;width:728px;height:1px;background:#7d7d80"></div>
<div class="a" style="left:118px;top:384px;width:728px;height:1px;background:#7d7d80"></div>
<div class="a" style="left:118px;top:408px;width:728px;height:1px;background:#7d7d80"></div>
<div class="a" style="left:118px;top:432px;width:728px;height:1px;background:#7d7d80"></div>
<div class="a" style="left:118px;top:456px;width:728px;height:1px;background:#7d7d80"></div>
<div class="a" style="left:118px;top:216px;width:1px;height:241px;background:#7d7d80"></div>
<div class="a" style="left:239px;top:216px;width:1px;height:241px;background:#7d7d80"></div>
<div class="a" style="left:361px;top:216px;width:1px;height:241px;background:#7d7d80"></div>
<div class="a" style="left:482px;top:216px;width:1px;height:241px;background:#7d7d80"></div>
<div class="a" style="left:603px;top:216px;width:1px;height:241px;background:#7d7d80"></div>
<div class="a" style="left:724px;top:216px;width:1px;height:241px;background:#7d7d80"></div>
<div class="a" style="left:845px;top:216px;width:1px;height:241px;background:#7d7d80"></div>
<div class="a" style="left:239px;top:216px;width:1px;height:24px;background:#1c4596"></div>
<div class="a" style="left:361px;top:216px;width:1px;height:24px;background:#1c4596"></div>
<div class="a" style="left:482px;top:216px;width:1px;height:24px;background:#1c4596"></div>
<div class="a" style="left:603px;top:216px;width:1px;height:24px;background:#1c4596"></div>
<div class="a" style="left:724px;top:216px;width:1px;height:24px;background:#1c4596"></div>
<div class="a" style="left:725px;top:241px;width:121px;height:1px;background:#6e7b99"></div>
<div class="a" style="left:725px;top:265px;width:121px;height:1px;background:#6e7b99"></div>
<div class="a" style="left:725px;top:289px;width:121px;height:1px;background:#6e7b99"></div>
<div class="a" style="left:725px;top:313px;width:121px;height:1px;background:#6e7b99"></div>
<div class="a" style="left:725px;top:337px;width:121px;height:1px;background:#6e7b99"></div>
<div class="a" style="left:725px;top:361px;width:121px;height:1px;background:#6e7b99"></div>
<div class="a" style="left:725px;top:384px;width:121px;height:1px;background:#6e7b99"></div>
<div class="a" style="left:725px;top:408px;width:121px;height:1px;background:#6e7b99"></div>
<div class="a" style="left:725px;top:432px;width:121px;height:1px;background:#6e7b99"></div>
<div class="a" style="left:725px;top:456px;width:121px;height:1px;background:#6e7b99"></div>
<div class="a" style="left:845px;top:216px;width:1px;height:241px;background:#6e7b99"></div>
<div class="a" style="left:724px;top:216px;width:1px;height:241px;background:#707a90"></div>
<div class="a" style="left:118px;top:456px;width:607px;height:1px;background:#6e7b99"></div>
<div class="a ch" style="left:34px;width:85px;background:#efeff1;color:#1a1a1a">A</div>
<div class="a ch" style="left:119px;width:121px;background:#d4d3d5;color:#2c6a47">B</div>
<div class="a" style="left:119px;top:191px;width:121px;height:1px;background:#5f8a70"></div>
<div class="a ch" style="left:240px;width:122px;background:#efeff1;color:#1a1a1a">C</div>
<div class="a ch" style="left:362px;width:121px;background:#efeff1;color:#1a1a1a">D</div>
<div class="a ch" style="left:483px;width:121px;background:#efeff1;color:#1a1a1a">E</div>
<div class="a ch" style="left:604px;width:121px;background:#efeff1;color:#1a1a1a">F</div>
<div class="a ch" style="left:725px;width:121px;background:#efeff1;color:#1a1a1a">G</div>
<div class="a ch" style="left:846px;width:84px;background:#efeff1;color:#1a1a1a">H</div>
<div class="a ch" style="left:930px;width:84px;background:#efeff1;color:#1a1a1a">I</div>
<div class="a ch" style="left:1014px;width:84px;background:#efeff1;color:#1a1a1a">J</div>
<div class="a" style="left:34px;top:191px;width:84px;height:1px;background:#cacacd"></div>
<div class="a" style="left:240px;top:191px;width:790px;height:1px;background:#cacacd"></div>
<div class="a rh" style="top:192px;height:24px;line-height:25px;background:#efeff1;color:#1a1a1a">1</div>
<div class="a rh" style="top:216px;height:26px;line-height:27px;background:#efeff1;color:#1a1a1a">2</div>
<div class="a rh" style="top:242px;height:24px;line-height:25px;background:#efeff1;color:#1a1a1a">3</div>
<div class="a rh" style="top:266px;height:24px;line-height:25px;background:#efeff1;color:#1a1a1a">4</div>
<div class="a rh" style="top:290px;height:24px;line-height:25px;background:#d2d1d3;color:#2c6a47">5</div>
<div class="a rh" style="top:314px;height:24px;line-height:25px;background:#d2d1d3;color:#2c6a47">6</div>
<div class="a rh" style="top:338px;height:24px;line-height:25px;background:#d2d1d3;color:#2c6a47">7</div>
<div class="a rh" style="top:362px;height:23px;line-height:24px;background:#d2d1d3;color:#2c6a47">8</div>
<div class="a rh" style="top:385px;height:24px;line-height:25px;background:#d2d1d3;color:#2c6a47">9</div>
<div class="a rh" style="top:409px;height:24px;line-height:25px;background:#d2d1d3;color:#2c6a47">10</div>
<div class="a rh" style="top:433px;height:24px;line-height:25px;background:#efeff1;color:#1a1a1a">11</div>
<div class="a rh" style="top:457px;height:24px;line-height:25px;background:#efeff1;color:#1a1a1a">12</div>
<div class="a rh" style="top:481px;height:24px;line-height:25px;background:#efeff1;color:#1a1a1a">13</div>
<div class="a rh" style="top:505px;height:24px;line-height:25px;background:#efeff1;color:#1a1a1a">14</div>
<div class="a rh" style="top:529px;height:24px;line-height:25px;background:#efeff1;color:#1a1a1a">15</div>
<div class="a rh" style="top:553px;height:24px;line-height:25px;background:#efeff1;color:#1a1a1a">16</div>
<div class="a" style="left:33px;top:192px;width:1px;height:384px;background:#d0d0d4"></div>
<svg style="left:0;top:0" width="40" height="200"><path d="M12.5 190L33 169V190Z" fill="#b4b4b6"/></svg>
<div class="a" style="left:118px;top:290px;width:1px;height:143px;background:#4f6f5c"></div>
<div class="a" style="left:239px;top:290px;width:1px;height:143px;background:#4f6f5c"></div>
<div class="a" style="left:118px;top:432px;width:122px;height:1px;background:#667a70"></div>
<div class="a" style="left:238px;top:431px;width:3px;height:3px;background:#3d5a48"></div>
<svg style="left:0;top:0" width="1024" height="576">
<g fill="none" stroke="#dce8f7" stroke-width="1.2" stroke-dasharray="2 4.6">
<path d="M119 241.6H239.5"/><path d="M119 265.1H239.5"/><path d="M119.4 241.6V265.1"/><path d="M239.2 241.6V265.1"/>
</g>
<path d="M247 419.8L296.3 389.7V405.8H388.8V433.9H296.3V450.3Z" fill="#2157c4"/>
<path d="M142.9 413.3H149.5V417.7H153.5V424H149.5V428H142.9V424H139V417.7H142.9Z" fill="#fff" stroke="#000" stroke-width="1.6" stroke-linejoin="miter"/>
<path d="M160.2 415.2H163.6V421H160.2Z" fill="#111"/>
<path d="M157.5 421.2H166.5L167.5 427.7H155.8Z" fill="#fff" stroke="#111" stroke-width="1.1"/>
<path d="M158 424.5V427M160.5 424.5V427M163 424.5V427M165.5 424.5V427" stroke="#111" stroke-width="0.7"/>
</svg>

</body></html>
